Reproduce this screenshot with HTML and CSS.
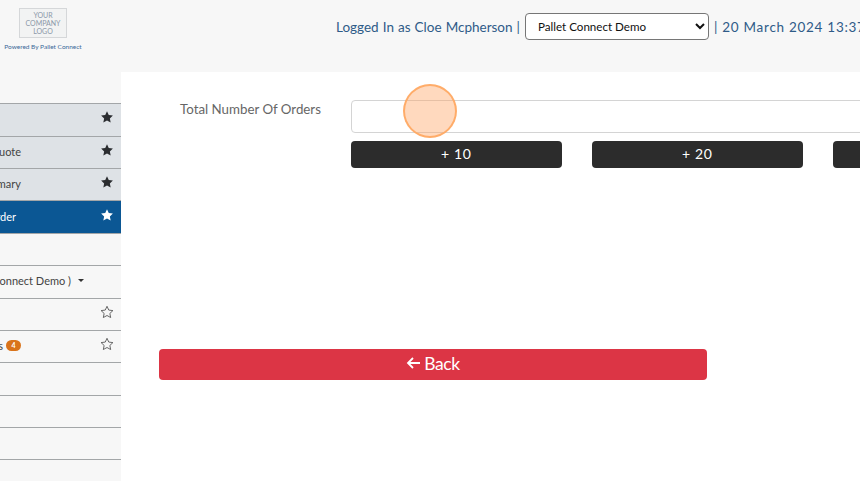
FILE: index.html
```html
<!DOCTYPE html>
<html lang="en">
<head>
<meta charset="utf-8">
<title>Total Number Of Orders</title>
<link rel="stylesheet" href="styles.css">
</head>
<body>
<svg class="defs" width="0" height="0" aria-hidden="true">
  <symbol id="star" viewBox="0 0 24 24"><path d="M12 2.2l3 6.5 7.1.9-5.2 4.9 1.4 7-6.3-3.5-6.3 3.5 1.4-7L1.900 9.600 9 8.700z"/></symbol>
</svg>
<header class="topbar">
  <div class="brand">
    <div class="logo"><span>YOUR</span><span>COMPANY</span><span>LOGO</span></div>
    <div class="powered">Powered By Pallet Connect</div>
  </div>
  <div class="session">
    <span class="user">Logged In as Cloe Mcpherson&nbsp;|</span>
    <select class="company"><option>Pallet Connect Demo</option></select>
    <span class="date">| 20 March 2024 13:37:42</span>
  </div>
</header>
<div class="body">
  <nav class="sidebar">
    <a class="row shaded"><span class="label end-none"></span><svg class="star"><use href="#star"/></svg></a>
    <a class="row shaded"><span class="label end-21"><span>Quote</span></span><svg class="star"><use href="#star"/></svg></a>
    <a class="row shaded"><span class="label end-21"><span>Summary</span></span><svg class="star"><use href="#star"/></svg></a>
    <a class="row active"><span class="label end-16"><span>Order</span></span><svg class="star"><use href="#star"/></svg></a>
    <a class="row"></a>
    <a class="row"><span class="label end-72"><span>( Pallet Connect Demo&nbsp;)</span></span><span class="caret"></span></a>
    <a class="row"><span class="label end-none"></span><svg class="star hollow"><use href="#star"/></svg></a>
    <a class="row"><span class="label end-3"><span>Orders</span></span><span class="badge">4</span><svg class="star hollow"><use href="#star"/></svg></a>
    <a class="row"></a>
    <a class="row"></a>
    <a class="row"></a>
    <a class="row"></a>
  </nav>
  <main class="content">
    <div class="field">
      <label class="field-label" for="orders">Total Number Of Orders</label>
      <div class="field-control">
        <input id="orders" class="input" type="text">
        <div class="quick">
          <button class="dark">+ 10</button>
          <button class="dark">+ 20</button>
          <button class="dark">+ 50</button>
        </div>
      </div>
    </div>
    <button class="back"><svg class="arrow" viewBox="0 0 14 14"><path d="M7 2L2 7l5 5M2 7h12"/></svg>Back</button>
  </main>
</div>
<div class="cursor"></div>
</body>
</html>
```
FILE: styles.css
```css
* { box-sizing: border-box; }
html, body { margin: 0; height: 100%; overflow: hidden; }
body { background: #fff; font-family: Lato, "Open Sans", sans-serif; color: #333; position: relative; }
.defs { position: absolute; }

.topbar { height: 72px; background: #f7f7f7; display: flex; white-space: nowrap; }
.brand { width: 336px; flex: none; padding: 8px 0 0 0; }
.logo { width: 48px; height: 30px; margin-left: 19px; border: 1px solid #d5d7d9; background: #f2f3f3; display: flex; flex-direction: column; align-items: center; justify-content: center; font-size: 7px; line-height: 8px; color: #8b98a8; }
.powered { width: 86px; text-align: center; margin-top: 4px; font-size: 6.5px; line-height: 9px; color: #3d6a99; }
.session { display: flex; align-items: center; gap: 5px; height: 53px; font-size: 13.5px; font-weight: 400; color: #2f5b88; }
.user { word-spacing: .6px; }
.company { width: 184px; height: 27px; background: #fff; border: 1px solid #767676; border-radius: 4px; padding-left: 8px; font-family: Lato, sans-serif; font-size: 11.6px; color: #111; }
.date { letter-spacing: .72px; }

.body { display: flex; height: 409px; }
.sidebar { width: 121px; flex: none; background: #f7f7f7; padding-top: 31.2px; overflow: hidden; }
.row { height: 32.4px; border-top: 1.5px solid #a3a6a8; display: flex; align-items: center; padding-bottom: 2px; font-size: 11px; color: #444; white-space: nowrap; position: relative; }
.row:last-child { height: 21px; }
.shaded { background: #dee2e6; }
.active { background: #0b5794; color: #fff; }
.label { display: flex; justify-content: flex-end; flex: none; }
.end-none { width: 0; }
.end-21 { width: 21px; }
.end-16 { width: 16px; }
.end-72 { width: 71px; }
.end-3 { width: 3px; }
.star { width: 14px; height: 14px; margin-left: auto; margin-right: 7px; margin-top: -3px; fill: #2b2d30; flex: none; }
.active .star { fill: #fff; }
.star.hollow { fill: none; stroke: #555; stroke-width: 1.5; }
.caret { margin-left: 7px; border: 3px solid transparent; border-top-color: #333; border-bottom: 0; }
.badge { margin-left: 3px; width: 15px; height: 11px; border-radius: 6px; background: #d9731a; color: #fff; font-size: 7px; font-weight: 700; line-height: 11px; text-align: center; }

.content { flex: 1; min-width: 0; padding: 28px 0 0 38px; }
.field { display: flex; width: 800px; }
.field-label { width: 192px; flex: none; padding: 0 0 0 21px; font-size: 13.3px; line-height: 18px; color: #666; }
.field-control { flex: none; width: 600px; }
.input { display: block; width: 100%; height: 33px; background: #fff; border: 1px solid #d4d4d4; border-radius: 4px; }
.quick { display: flex; gap: 30.5px; margin-top: 8px; }
.dark { width: 210.500px; flex: none; height: 27px; padding: 0 0 3px; background: #2c2c2c; color: #fff; border: 0; border-radius: 4px; font-family: Lato, sans-serif; font-size: 14px; letter-spacing: .7px; }
.back { display: flex; align-items: center; justify-content: center; gap: 4px; width: 548px; height: 31px; margin-top: 181px; padding: 0 0 3px; background: #dc3545; color: #fff; border: 0; border-radius: 4px; font-family: Lato, sans-serif; font-size: 17.5px; letter-spacing: -.4px; }
.arrow { width: 14px; height: 14px; fill: none; stroke: #fff; stroke-width: 1.8; }

.cursor { position: absolute; left: 403px; top: 84px; width: 54px; height: 54px; border-radius: 50%; background: rgba(255, 165, 100, .42); border: 2px solid rgba(255, 170, 100, .95); }
```
